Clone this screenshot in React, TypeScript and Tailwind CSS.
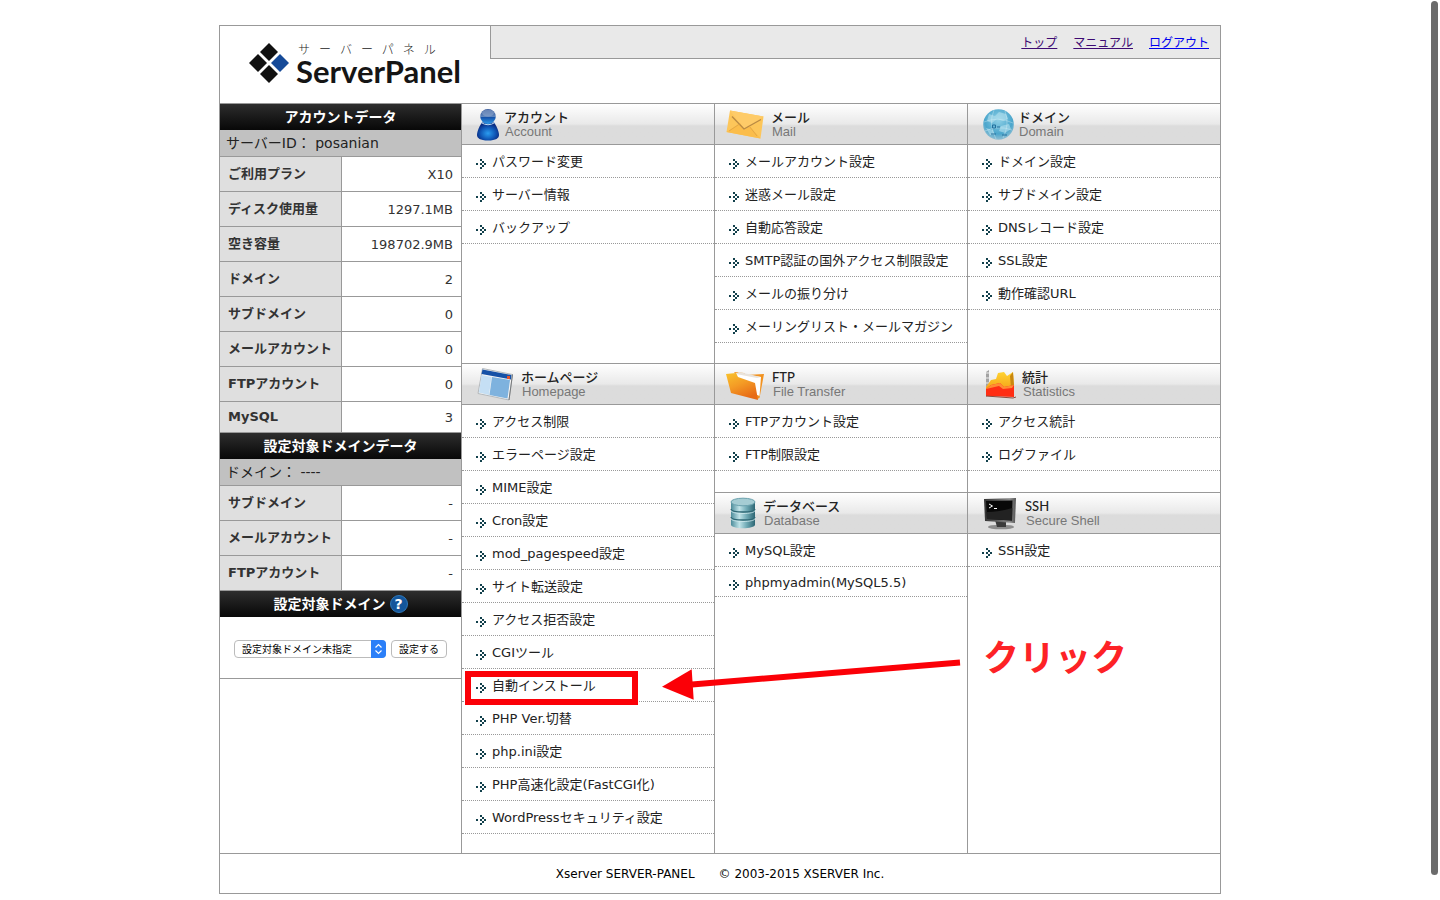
import type { ReactNode } from "react";

type MenuItem = {
  label: string;
  compact?: boolean;
  highlight?: boolean;
};

type MenuSection = {
  title: string;
  subtitle: string;
  icon: ReactNode;
  items: MenuItem[];
};

function AccountIcon() {
  return (
    <svg width="42" height="40" viewBox="0 0 42 40">
      <defs>
        <radialGradient id="acc-body" cx="50%" cy="60%" r="55%">
          <stop offset="0" stopColor="#2a9cf0" />
          <stop offset="0.6" stopColor="#1059b8" />
          <stop offset="1" stopColor="#0a2a80" />
        </radialGradient>
        <linearGradient id="acc-head" x1="0" y1="0" x2="0" y2="1">
          <stop offset="0" stopColor="#24478f" />
          <stop offset="0.5" stopColor="#5f86bd" />
          <stop offset="0.55" stopColor="#1450a8" />
          <stop offset="1" stopColor="#2f9bea" />
        </linearGradient>
      </defs>
      <path
        d="M20 18.500H32C34 21 37 27 37 31C37 34 34 36.500 26 36.500C18 36.500 15 34 15 31C15 27 18 21 20 18.500Z"
        fill="url(#acc-body)"
      />
      <ellipse cx="26" cy="12.500" rx="7.800" ry="7.500" fill="url(#acc-head)" />
      <ellipse cx="26" cy="9" rx="6" ry="3.400" fill="#8ea6cb" opacity="0.6" />
      <path d="M19 18.500Q26 23 33 18.500" stroke="#bcdcf5" fill="none" />
    </svg>
  );
}

function MailIcon() {
  return (
    <svg width="56" height="40" viewBox="0 0 56 40">
      <path d="M15 6.500L48.500 12.500L45.500 34.500L11.500 28Z" fill="#fdc65a" />
      <path d="M15 6.500L48.500 12.500L29 25Z" fill="#fecb68" />
      <path d="M11.500 28L25 19L29 25L34 21.500L45.500 34.500Z" fill="#fbbd4b" />
      <path
        d="M17 12.500L29 25L46 15.500"
        fill="none"
        stroke="#b98a45"
        strokeWidth="1.300"
      />
      <path d="M14 27L24.500 20M34.500 22.500L42 32" stroke="#e5a845" />
    </svg>
  );
}

function DomainIcon() {
  return (
    <svg width="50" height="40" viewBox="0 0 50 40">
      <defs>
        <radialGradient id="globe" cx="50%" cy="35%" r="65%">
          <stop offset="0" stopColor="#8fd0e6" />
          <stop offset="0.7" stopColor="#4ba6cc" />
          <stop offset="1" stopColor="#91bfd3" />
        </radialGradient>
      </defs>
      <circle cx="30.500" cy="20.500" r="15.300" fill="url(#globe)" />
      <path
        d="M21 10L27 12L31 8L38 10L40 15L35 17L29 15L24 19L19 17ZM18 24L25 26L27 31L22 31ZM33 22L41 20L43 25L37 29L31 27Z"
        fill="#b6e1ee"
        opacity="0.6"
      />
      <path
        d="M16 18Q30 12 45 19M17 27Q30 21 44 26M26 6Q20 20 28 35M37 7Q42 20 35 34"
        fill="none"
        stroke="#dff3f8"
        strokeWidth="0.500"
        opacity="0.7"
      />
      <path
        d="M24.500 21h3v3h-3zM29 23h3M23 30h5M34 31h5"
        stroke="#236f9c"
        fill="none"
      />
    </svg>
  );
}

function HomepageIcon() {
  return (
    <svg width="59" height="40" viewBox="0 0 59 40">
      <path d="M20.500 4.500L50.500 10.500L47 36L16 29.500Z" fill="#f4f4f4" stroke="#b4b9bd" />
      <path d="M50.500 10.500L47 36" stroke="#77797b" />
      <path d="M20.500 5.500L49.500 11L49 15.500L19.500 10Z" fill="#1651a6" />
      <path d="M19.500 11L29.500 13L27 31L17 28.500Z" fill="#c5dff4" />
      <path d="M30 13L48 16L45.500 34.500L27.500 31Z" fill="#7eb2de" />
      <rect x="45" y="12" width="3" height="3" fill="#e4532c" />
    </svg>
  );
}

function FtpIcon() {
  return (
    <svg width="57" height="40" viewBox="0 0 57 40">
      <defs>
        <linearGradient id="ftp-front" x1="0" y1="0" x2="0.500" y2="1">
          <stop offset="0" stopColor="#f9c32d" />
          <stop offset="0.500" stopColor="#f49b25" />
          <stop offset="1" stopColor="#e76b16" />
        </linearGradient>
      </defs>
      <path d="M19 8L29 9L31 11L49 10L44.500 34L42 35Z" fill="#f19220" />
      <path d="M21 9L46 13L44.500 32L24 23Z" fill="#fff" />
      <path d="M24 8L46 13L42 14L21 10Z" fill="#e8e3dc" />
      <path d="M11 10L21 9L23 13L40 19L43 36L16 29Z" fill="url(#ftp-front)" />
    </svg>
  );
}

function StatisticsIcon() {
  return (
    <svg width="54" height="40" viewBox="0 0 54 40">
      <defs>
        <linearGradient id="stat-y" x1="0" y1="0" x2="0" y2="1">
          <stop offset="0" stopColor="#ffd331" />
          <stop offset="1" stopColor="#f4a017" />
        </linearGradient>
      </defs>
      <path d="M18 8L21 6V30L18 33Z" fill="#a3a3a3" />
      <path d="M18 9h3M18 14h3M18 19h3" stroke="#eee" />
      <path
        d="M18 23L23 16L28 15L30 9L36 8L39 12L45 8L46 22L18 27Z"
        fill="url(#stat-y)"
      />
      <path d="M42 12L45 8L46 22L43 24Z" fill="#c88710" />
      <path d="M18 25L23 21L32 19L36 23L46 21V33L18 32Z" fill="#ff2e14" />
      <path d="M18 25L23 21L32 19L36 23L46 21L44 24L35 25L31 22Z" fill="#ff8c34" />
      <path d="M18 32L45 34L48 33" stroke="#8c4b3e" strokeWidth="1" fill="none" />
    </svg>
  );
}

function DatabaseIcon() {
  return (
    <svg width="48" height="40" viewBox="0 0 48 40">
      <defs>
        <linearGradient id="db" x1="0" y1="0" x2="1" y2="0">
          <stop offset="0" stopColor="#4d8c9a" />
          <stop offset="0.350" stopColor="#c0e3e8" />
          <stop offset="0.650" stopColor="#70aab5" />
          <stop offset="1" stopColor="#2d6674" />
        </linearGradient>
      </defs>
      <path d="M16 9V31.500C16 36.500 40 36.500 40 31.500V9Z" fill="url(#db)" />
      <ellipse cx="28" cy="9" rx="12" ry="3.800" fill="#a5ccd3" stroke="#6aa1ad" />
      <path
        d="M16 16C16 20 40 20 40 16M16 24C16 28 40 28 40 24"
        fill="none"
        stroke="#2f6875"
        strokeWidth="1.300"
      />
      <path
        d="M16 17.500C16 21.500 40 21.500 40 17.500M16 25.500C16 29.500 40 29.500 40 25.500"
        fill="none"
        stroke="#d0eaee"
        strokeWidth="0.800"
      />
    </svg>
  );
}

function SshIcon() {
  return (
    <svg width="57" height="40" viewBox="0 0 57 40">
      <defs>
        <linearGradient id="ssh-frame" x1="0" y1="0" x2="1" y2="0">
          <stop offset="0" stopColor="#333" />
          <stop offset="0.800" stopColor="#888" />
          <stop offset="1" stopColor="#555" />
        </linearGradient>
      </defs>
      <ellipse cx="33" cy="34" rx="13" ry="2.300" fill="#8c8c8c" />
      <path d="M27 27L38 28L38 34H29Z" fill="#3a3a3a" />
      <path d="M16 6L48 5L47 30L17 28Z" fill="url(#ssh-frame)" />
      <path d="M18 8L44.500 7.500L44 27.500L19 26Z" fill="#080808" />
      <path d="M18.500 19Q31 19 44.300 15L44 27.500L19 26Z" fill="#222" />
      <path d="M21 11L24.500 13L21 15M26 15.500h3" stroke="#fff" fill="none" />
    </svg>
  );
}

function ItemArrow() {
  return (
    <svg
      width="10"
      height="10"
      viewBox="0 0 10 10"
      shapeRendering="crispEdges"
      className="mt-1 shrink-0"
    >
      <path
        d="M0 4h2v2h-2zM4 0h2v2h-2zM6 2h2v2h-2zM4 4h2v2h-2zM8 4h2v2h-2zM6 6h2v2h-2zM4 8h2v2h-2z"
        fill="#12404c"
      />
    </svg>
  );
}

function BrandMark() {
  return (
    <svg width="42" height="42" viewBox="0 0 42 42">
      <path d="M21 1L30 10L21 19L12 10Z" fill="#111" />
      <path d="M10 12L19 21L10 30L1 21Z" fill="#111" />
      <path d="M32 12L41 21L32 30L23 21Z" fill="#164a98" />
      <path d="M21 23L30 32L21 41L12 32Z" fill="#111" />
    </svg>
  );
}

const account: MenuSection = {
  title: "アカウント",
  subtitle: "Account",
  icon: <AccountIcon />,
  items: [
    { label: "パスワード変更" },
    { label: "サーバー情報" },
    { label: "バックアップ" },
  ],
};

const mail: MenuSection = {
  title: "メール",
  subtitle: "Mail",
  icon: <MailIcon />,
  items: [
    { label: "メールアカウント設定" },
    { label: "迷惑メール設定" },
    { label: "自動応答設定" },
    { label: "SMTP認証の国外アクセス制限設定" },
    { label: "メールの振り分け" },
    { label: "メーリングリスト・メールマガジン" },
  ],
};

const domain: MenuSection = {
  title: "ドメイン",
  subtitle: "Domain",
  icon: <DomainIcon />,
  items: [
    { label: "ドメイン設定" },
    { label: "サブドメイン設定" },
    { label: "DNSレコード設定" },
    { label: "SSL設定" },
    { label: "動作確認URL" },
  ],
};

const homepage: MenuSection = {
  title: "ホームページ",
  subtitle: "Homepage",
  icon: <HomepageIcon />,
  items: [
    { label: "アクセス制限" },
    { label: "エラーページ設定" },
    { label: "MIME設定" },
    { label: "Cron設定" },
    { label: "mod_pagespeed設定" },
    { label: "サイト転送設定" },
    { label: "アクセス拒否設定" },
    { label: "CGIツール" },
    { label: "自動インストール", highlight: true },
    { label: "PHP Ver.切替" },
    { label: "php.ini設定" },
    { label: "PHP高速化設定(FastCGI化)" },
    { label: "WordPressセキュリティ設定" },
  ],
};

const ftp: MenuSection = {
  title: "FTP",
  subtitle: "File Transfer",
  icon: <FtpIcon />,
  items: [{ label: "FTPアカウント設定" }, { label: "FTP制限設定" }],
};

const statistics: MenuSection = {
  title: "統計",
  subtitle: "Statistics",
  icon: <StatisticsIcon />,
  items: [{ label: "アクセス統計" }, { label: "ログファイル" }],
};

const database: MenuSection = {
  title: "データベース",
  subtitle: "Database",
  icon: <DatabaseIcon />,
  items: [
    { label: "MySQL設定" },
    { label: "phpmyadmin(MySQL5.5)", compact: true },
  ],
};

const ssh: MenuSection = {
  title: "SSH",
  subtitle: "Secure Shell",
  icon: <SshIcon />,
  items: [{ label: "SSH設定" }],
};

const accountRows = [
  { label: "ご利用プラン", value: "X10" },
  { label: "ディスク使用量", value: "1297.1MB" },
  { label: "空き容量", value: "198702.9MB" },
  { label: "ドメイン", value: "2" },
  { label: "サブドメイン", value: "0" },
  { label: "メールアカウント", value: "0" },
  { label: "FTPアカウント", value: "0" },
  { label: "MySQL", value: "3", compact: true },
];

const domainRows = [
  { label: "サブドメイン", value: "-" },
  { label: "メールアカウント", value: "-" },
  { label: "FTPアカウント", value: "-" },
];

function Section({ section }: { section: MenuSection }) {
  return (
    <section>
      <div className="flex h-[41px] border-b border-[#999] bg-linear-to-b from-white from-0% via-[#e9e9e9] via-50% to-[#dcdcdc] to-55%">
        {section.icon}
        <div className="pt-[5px]">
          <h2 className="font-['Lato','Noto_Sans_CJK_JP',sans-serif] text-[13px] leading-4 font-medium text-[#222]">
            {section.title}
          </h2>
          <p className="pl-px font-['Liberation_Sans',sans-serif] text-[13px] leading-[14px] text-[#777]">
            {section.subtitle}
          </p>
        </div>
      </div>
      <ul>
        {section.items.map((item) => (
          <li
            key={item.label}
            className={`relative border-b border-dotted border-[#999] ${
              item.compact ? "h-[30px]" : "h-[33px]"
            }`}
          >
            <a
              href="#"
              className="flex h-full items-center gap-[6px] pt-[2px] pl-[14px] whitespace-nowrap text-[#222]"
            >
              <ItemArrow />
              {item.label}
            </a>
            {item.highlight && (
              <div className="pointer-events-none absolute top-[2px] left-[3px] h-[34px] w-[173px] border-6 border-[#fb0007]" />
            )}
          </li>
        ))}
      </ul>
    </section>
  );
}

function SideTitle({ children }: { children: ReactNode }) {
  return (
    <h2 className="flex h-[26px] items-center justify-center gap-1 bg-linear-to-b from-[#2e2e2e] to-[#080808] text-sm font-bold text-white">
      {children}
    </h2>
  );
}

function DataTable({
  rows,
}: {
  rows: { label: string; value: string; compact?: boolean }[];
}) {
  return (
    <table className="w-full border-separate border-spacing-0">
      <tbody>
        {rows.map((row) => (
          <tr key={row.label} className={row.compact ? "h-[31px]" : "h-[35px]"}>
            <th
              scope="row"
              className="w-[122px] border-r border-b border-[#999] bg-[#dfdfdf] p-0 pl-2 text-left font-bold whitespace-nowrap text-[#333]"
            >
              {row.label}
            </th>
            <td className="border-b border-[#999] p-0 pt-[2px] pr-2 text-right text-[#333]">
              {row.value}
            </td>
          </tr>
        ))}
      </tbody>
    </table>
  );
}

function Sidebar() {
  return (
    <aside className="border-r border-[#999]">
      <SideTitle>アカウントデータ</SideTitle>
      <p className="flex h-[27px] items-center border-b border-[#999] bg-[#c1c1c1] pl-[6px] text-sm text-[#222]">
        サーバーID： posanian
      </p>
      <DataTable rows={accountRows} />

      <SideTitle>設定対象ドメインデータ</SideTitle>
      <p className="flex h-[27px] items-center border-b border-[#999] bg-[#c1c1c1] pl-[6px] text-sm text-[#222]">
        ドメイン： ----
      </p>
      <DataTable rows={domainRows} />

      <SideTitle>
        設定対象ドメイン
        <a
          href="#"
          className="flex size-[18px] items-center justify-center rounded-full border border-[#2f78b8] bg-[#14569b] text-sm leading-4"
        >
          ?
        </a>
      </SideTitle>
      <form
        onSubmit={(e) => e.preventDefault()}
        className="flex h-[62px] items-center gap-[5px] border-b border-[#999] pt-[2px] pl-[14px] text-[10px] leading-4"
      >
        <label className="relative w-[152px]">
          <select
            aria-label="設定対象ドメイン"
            className="block h-[18px] w-full appearance-none rounded-[4px] border border-[#bbb] bg-white pt-px pl-[7px] text-black"
          >
            <option>設定対象ドメイン未指定</option>
          </select>
          <svg
            width="15"
            height="18"
            viewBox="0 0 15 18"
            className="pointer-events-none absolute top-0 right-0"
          >
            <path d="M0 0H11Q15 0 15 4V14Q15 18 11 18H0Z" fill="#2b7ff8" />
            <path
              d="M4.500 7.500L7.500 4.500L10.500 7.500M4.500 10.500L7.500 13.500L10.500 10.500"
              fill="none"
              stroke="#fff"
              strokeWidth="1.200"
            />
          </svg>
        </label>
        <button
          type="submit"
          className="h-[18px] w-[56px] rounded-[4px] border border-[#bbb] bg-white pt-px text-black"
        >
          設定する
        </button>
      </form>
    </aside>
  );
}

export default function App() {
  return (
    <div className="min-h-screen bg-white px-4 pt-[25px] pb-[6px] font-['DejaVu_Sans','Noto_Sans_CJK_JP',sans-serif] text-[13px] leading-5">
      <div className="mx-auto max-w-[1002px] border border-[#999]">
        <header className="flex h-[77px]">
          <div className="flex w-[270px] gap-[6px] pt-4 pl-7">
            <BrandMark />
            <div className="font-['Lato','Noto_Sans_CJK_JP',sans-serif]">
              <p className="pl-[2px] text-xs leading-4 font-light tracking-[9px] whitespace-nowrap text-[#222]">
                サーバーパネル
              </p>
              <h1 className="text-[31px] leading-[26px] font-bold text-[#151515]">
                ServerPanel
              </h1>
            </div>
          </div>
          <nav className="flex h-[33px] flex-1 items-center justify-end gap-4 border-b border-l border-[#999] bg-[#e9e9e9] pt-[2px] pr-[11px] text-xs">
            <a href="#" className="text-[#3d0a73] underline">
              トップ
            </a>
            <a href="#" className="text-[#3d0a73] underline">
              マニュアル
            </a>
            <a href="#" className="text-[#0000ee] underline">
              ログアウト
            </a>
          </nav>
        </header>

        <div className="grid grid-cols-[242px_minmax(0,1fr)] border-y border-[#999]">
          <Sidebar />

          <main className="relative">
            <div className="grid grid-cols-[253fr_253fr_252fr] divide-x divide-[#999] border-b border-[#999]">
              <Section section={account} />
              <div className="pb-5">
                <Section section={mail} />
              </div>
              <Section section={domain} />
            </div>
            <div className="grid grid-cols-[253fr_253fr_252fr] divide-x divide-[#999]">
              <div className="pb-[19px]">
                <Section section={homepage} />
              </div>
              <div>
                <Section section={ftp} />
                <div className="mt-[21px] border-t border-[#999]">
                  <Section section={database} />
                </div>
              </div>
              <div>
                <Section section={statistics} />
                <div className="mt-[21px] border-t border-[#999]">
                  <Section section={ssh} />
                </div>
              </div>
            </div>

            {/* Callout pointing at the auto install link */}
            <svg
              width="300"
              height="46"
              viewBox="0 0 300 46"
              className="pointer-events-none absolute top-[554px] left-[200px]"
            >
              <path d="M30 26.500L298 4.500" stroke="#fb0007" strokeWidth="6" />
              <path d="M0 28.700L29.700 11.300L31.700 41.700Z" fill="#fb0007" />
            </svg>
            <p className="pointer-events-none absolute top-[524px] left-[521px] font-['Noto_Sans_CJK_JP',sans-serif] text-4xl leading-[54px] font-bold text-[#fd2226]">
              クリック
            </p>
          </main>
        </div>

        <footer className="flex h-[39px] items-center justify-center gap-6 text-xs text-black">
          <span>Xserver SERVER-PANEL</span>
          <span>© 2003-2015 XSERVER Inc.</span>
        </footer>
      </div>

      <div className="fixed top-px right-[2px] h-[874px] w-[7px] rounded-full bg-[#6b6b6b]" />
    </div>
  );
}
